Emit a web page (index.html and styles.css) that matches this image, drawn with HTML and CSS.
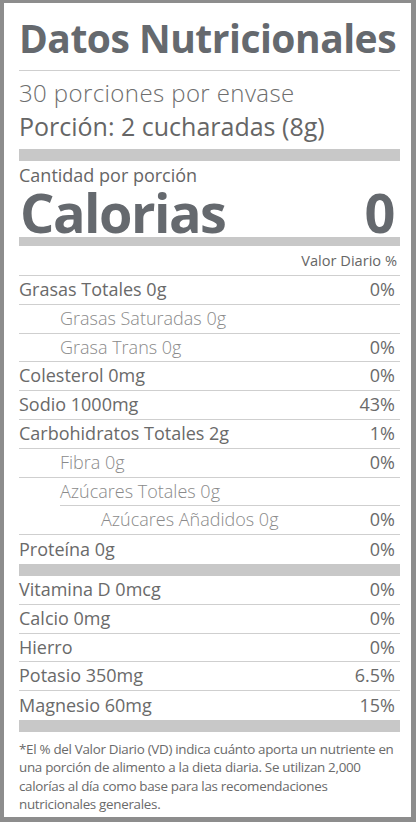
FILE: index.html
```html
<!DOCTYPE html>
<html lang="es">
<head>
  <meta charset="UTF-8">
  <title>Datos Nutricionales</title>
  <link rel="stylesheet" href="styles.css">
</head>
<body>
<div class="label">
  <h1 class="title">Datos Nutricionales</h1>
  <div class="serving">
    <p class="servings">30 porciones por envase</p>
    <p class="size">Porción: 2 cucharadas (8g)</p>
  </div>
  <div class="bar bar-big"></div>
  <p class="amount">Cantidad por porción</p>
  <div class="calories">
    <span>Calorias</span>
    <span>0</span>
  </div>
  <div class="bar bar-mid"></div>
  <div class="dv-head">Valor Diario %</div>

  <div class="row"><span>Grasas Totales 0g</span><span>0%</span></div>
  <div class="row sub"><span>Grasas Saturadas 0g</span><span></span></div>
  <div class="row sub"><span>Grasa Trans 0g</span><span>0%</span></div>
  <div class="row"><span>Colesterol 0mg</span><span>0%</span></div>
  <div class="row"><span>Sodio 1000mg</span><span>43%</span></div>
  <div class="row"><span>Carbohidratos Totales 2g</span><span>1%</span></div>
  <div class="row sub"><span>Fibra 0g</span><span>0%</span></div>
  <div class="row sub sub-line"><span>Azúcares Totales 0g</span><span></span></div>
  <div class="row subsub"><span>Azúcares Añadidos 0g</span><span>0%</span></div>
  <div class="row last"><span>Proteína 0g</span><span>0%</span></div>

  <div class="bar bar-big"></div>

  <div class="row"><span>Vitamina D 0mcg</span><span>0%</span></div>
  <div class="row"><span>Calcio 0mg</span><span>0%</span></div>
  <div class="row"><span>Hierro</span><span>0%</span></div>
  <div class="row"><span>Potasio 350mg</span><span>6.5%</span></div>
  <div class="row last"><span>Magnesio 60mg</span><span>15%</span></div>

  <div class="bar bar-big"></div>

  <p class="note">*El % del Valor Diario (VD) indica cuánto aporta un nutriente en una porción de alimento a la dieta diaria. Se utilizan 2,000 calorías al día como base para las recomendaciones nutricionales generales.</p>
</div>
</body>
</html>
```

FILE: styles.css
```css
* {
  margin: 0;
  padding: 0;
  box-sizing: border-box;
}
body {
  background: #8d8d8d;
  font-family: "Open Sans", "Noto Sans", sans-serif;
  color: #6a6a6a;
}
.label {
  width: 416px;
  height: 822px;
  background: #fff;
  border-style: solid;
  border-color: #8d8d8d;
  border-width: 3px 5px 5px 4px;
  padding: 15px 11px 0 15px;
}
.title {
  font-size: 39px;
  line-height: 40px;
  font-weight: 700;
  letter-spacing: -0.5px;
  white-space: nowrap;
  color: #65696e;
  padding-bottom: 12px;
  border-bottom: 1px solid #cfcfcf;
}
.serving {
  padding-top: 7px;
  padding-bottom: 6px;
}
.servings {
  font-size: 24px;
  line-height: 30px;
  font-weight: 300;
  letter-spacing: 0.4px;
  color: #6e6e6e;
}
.size {
  font-size: 25px;
  line-height: 34px;
  margin-top: 1px;
  color: #666;
}
.bar {
  background: #c8c8c8;
}
.bar-big {
  height: 12px;
}
.bar-mid {
  height: 9px;
}
.amount {
  font-size: 18px;
  line-height: 24px;
  margin-top: 2px;
  color: #666;
}
.calories {
  display: flex;
  justify-content: space-between;
  font-size: 54px;
  line-height: 50px;
  font-weight: 700;
  letter-spacing: -1.5px;
  color: #65696e;
  padding: 0 6px 0 1px;
}
.dv-head {
  text-align: right;
  font-size: 14.6px;
  line-height: 29px;
  padding-right: 3px;
  border-bottom: 1px solid #cfcfcf;
  color: #666;
}
.row {
  display: flex;
  justify-content: space-between;
  font-size: 18px;
  line-height: 27.8px;
  border-bottom: 1px solid #cfcfcf;
  padding-right: 5px;
}
.row.last {
  border-bottom: 0;
  line-height: 28.8px;
}
.sub {
  padding-left: 41px;
  font-weight: 300;
  color: #8a8a8a;
}
.sub span:last-child {
  font-weight: 400;
  color: #6a6a6a;
}
.sub-line {
  padding-left: 0;
  margin-left: 41px;
}
.subsub {
  padding-left: 82px;
  font-weight: 300;
  color: #8a8a8a;
}
.subsub span:last-child {
  font-weight: 400;
  color: #6a6a6a;
}
.note {
  font-size: 13.4px;
  line-height: 18.5px;
  letter-spacing: -0.3px;
  padding-top: 8px;
  color: #6a6a6a;
}
```
